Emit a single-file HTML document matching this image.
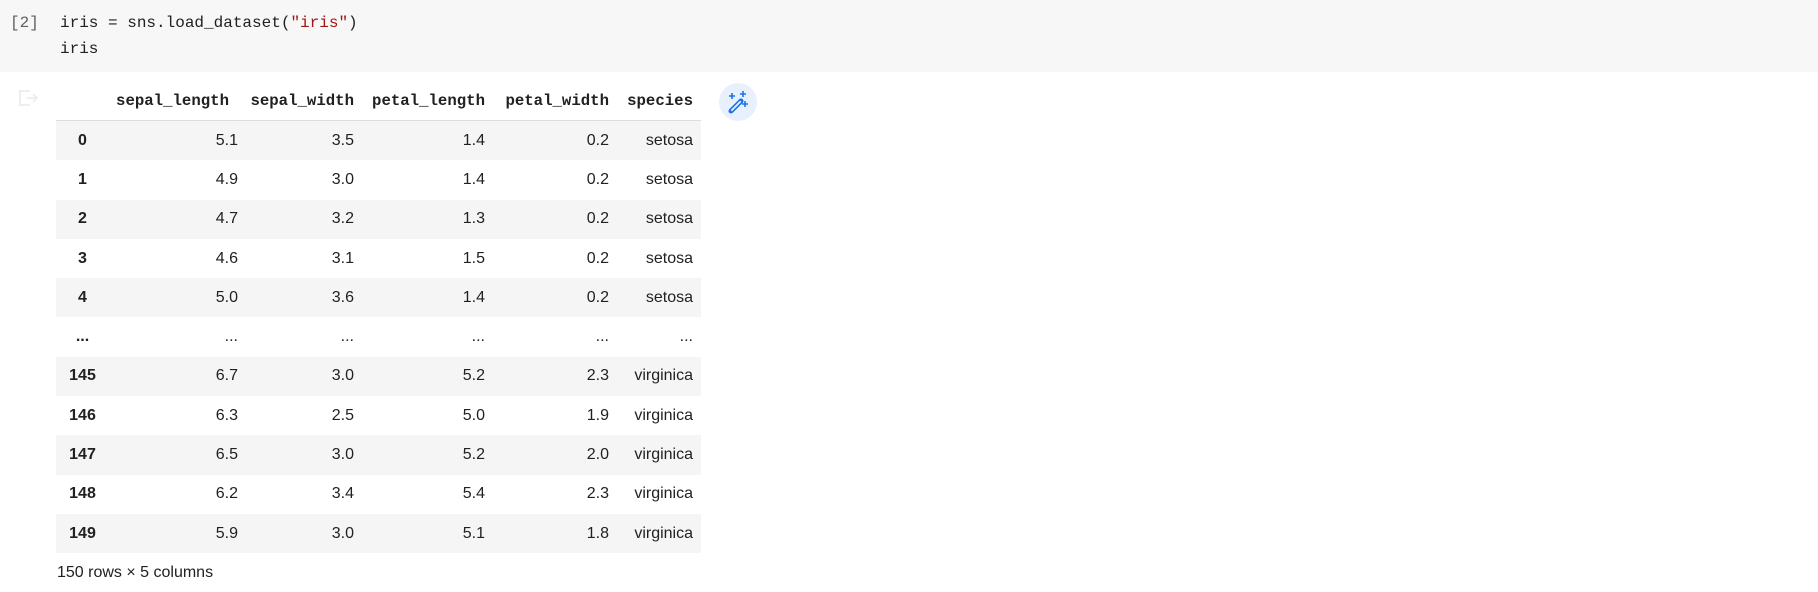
<!DOCTYPE html>
<html><head><meta charset="utf-8"><style>
*{margin:0;padding:0;box-sizing:border-box}
body{width:1818px;height:592px;background:#fff;position:relative;overflow:hidden;font-family:"Liberation Sans",Arial,sans-serif;color:#212121}
.code{position:absolute;left:0;top:0;width:1818px;height:72px;background:#f7f7f7}
.mono{font-family:"Liberation Mono","DejaVu Sans Mono",monospace}
.ln{position:absolute;font-size:16px;line-height:20px;white-space:pre;color:#212121}
.row{position:absolute;left:56px;width:645px;height:39.3px;display:flex;align-items:center;font-size:16px}
.row.g{background:#f5f5f5}
.c{text-align:right;padding-right:8px;white-space:nowrap}
.c0{width:51px;text-align:center;padding:0 0 0 2px;font-weight:bold}
.c1{width:139px}.c2{width:116px}.c3{width:131px}.c4{width:124px}.c5{width:84px}
.hdr{position:absolute;left:56px;top:82px;width:645px;height:39px;display:flex;align-items:center;font-family:"Liberation Mono",monospace;font-weight:bold;font-size:15.7px;border-bottom:1px solid #ddd}
.hdr .c1{padding-right:17px}
</style></head><body>
<div class="code">
<div class="ln mono" style="left:10px;top:13px;color:#616161">[2]</div>
<div class="ln mono" style="left:60px;top:13px">iris = sns.load_dataset(<span style="color:#a31515">"iris"</span>)</div>
<div class="ln mono" style="left:60px;top:39px">iris</div>
</div>
<svg style="position:absolute;left:18px;top:89px" width="22" height="18" viewBox="0 0 22 18"><path d="M12 2H2v14h10" fill="none" stroke="#eeeeee" stroke-width="2"/><path d="M9 9h10M15 5l4 4-4 4" fill="none" stroke="#eeeeee" stroke-width="2"/></svg>
<div class="hdr"><div class="c c0"></div><div class="c c1">sepal_length</div><div class="c c2">sepal_width</div><div class="c c3">petal_length</div><div class="c c4">petal_width</div><div class="c c5">species</div></div>
<svg style="position:absolute;left:718px;top:82px" width="40" height="40" viewBox="0 0 40 40"><circle cx="20" cy="20" r="19" fill="#e8f0fe"/><path d="M13 29l10-10" stroke="#1a73e8" stroke-width="5" stroke-linecap="round"/><path d="M13.8 28.2l8.4-8.4" stroke="#e8f0fe" stroke-width="1.8" stroke-linecap="round"/><path d="M14 11v6M11 14h6M25 9v6M22 12h6M27 19v6M24 22h6" stroke="#1a73e8" stroke-width="1.6"/></svg>
<div class="row g" style="top:121px"><div class="c c0">0</div><div class="c c1">5.1</div><div class="c c2">3.5</div><div class="c c3">1.4</div><div class="c c4">0.2</div><div class="c c5">setosa</div></div>
<div class="row" style="top:160.3px"><div class="c c0">1</div><div class="c c1">4.9</div><div class="c c2">3.0</div><div class="c c3">1.4</div><div class="c c4">0.2</div><div class="c c5">setosa</div></div>
<div class="row g" style="top:199.6px"><div class="c c0">2</div><div class="c c1">4.7</div><div class="c c2">3.2</div><div class="c c3">1.3</div><div class="c c4">0.2</div><div class="c c5">setosa</div></div>
<div class="row" style="top:238.9px"><div class="c c0">3</div><div class="c c1">4.6</div><div class="c c2">3.1</div><div class="c c3">1.5</div><div class="c c4">0.2</div><div class="c c5">setosa</div></div>
<div class="row g" style="top:278.2px"><div class="c c0">4</div><div class="c c1">5.0</div><div class="c c2">3.6</div><div class="c c3">1.4</div><div class="c c4">0.2</div><div class="c c5">setosa</div></div>
<div class="row" style="top:317.5px"><div class="c c0">...</div><div class="c c1">...</div><div class="c c2">...</div><div class="c c3">...</div><div class="c c4">...</div><div class="c c5">...</div></div>
<div class="row g" style="top:356.8px"><div class="c c0">145</div><div class="c c1">6.7</div><div class="c c2">3.0</div><div class="c c3">5.2</div><div class="c c4">2.3</div><div class="c c5">virginica</div></div>
<div class="row" style="top:396.1px"><div class="c c0">146</div><div class="c c1">6.3</div><div class="c c2">2.5</div><div class="c c3">5.0</div><div class="c c4">1.9</div><div class="c c5">virginica</div></div>
<div class="row g" style="top:435.4px"><div class="c c0">147</div><div class="c c1">6.5</div><div class="c c2">3.0</div><div class="c c3">5.2</div><div class="c c4">2.0</div><div class="c c5">virginica</div></div>
<div class="row" style="top:474.7px"><div class="c c0">148</div><div class="c c1">6.2</div><div class="c c2">3.4</div><div class="c c3">5.4</div><div class="c c4">2.3</div><div class="c c5">virginica</div></div>
<div class="row g" style="top:514px"><div class="c c0">149</div><div class="c c1">5.9</div><div class="c c2">3.0</div><div class="c c3">5.1</div><div class="c c4">1.8</div><div class="c c5">virginica</div></div>
<div style="position:absolute;left:57px;top:563px;font-size:16px;line-height:20px">150 rows × 5 columns</div>
</body></html>
